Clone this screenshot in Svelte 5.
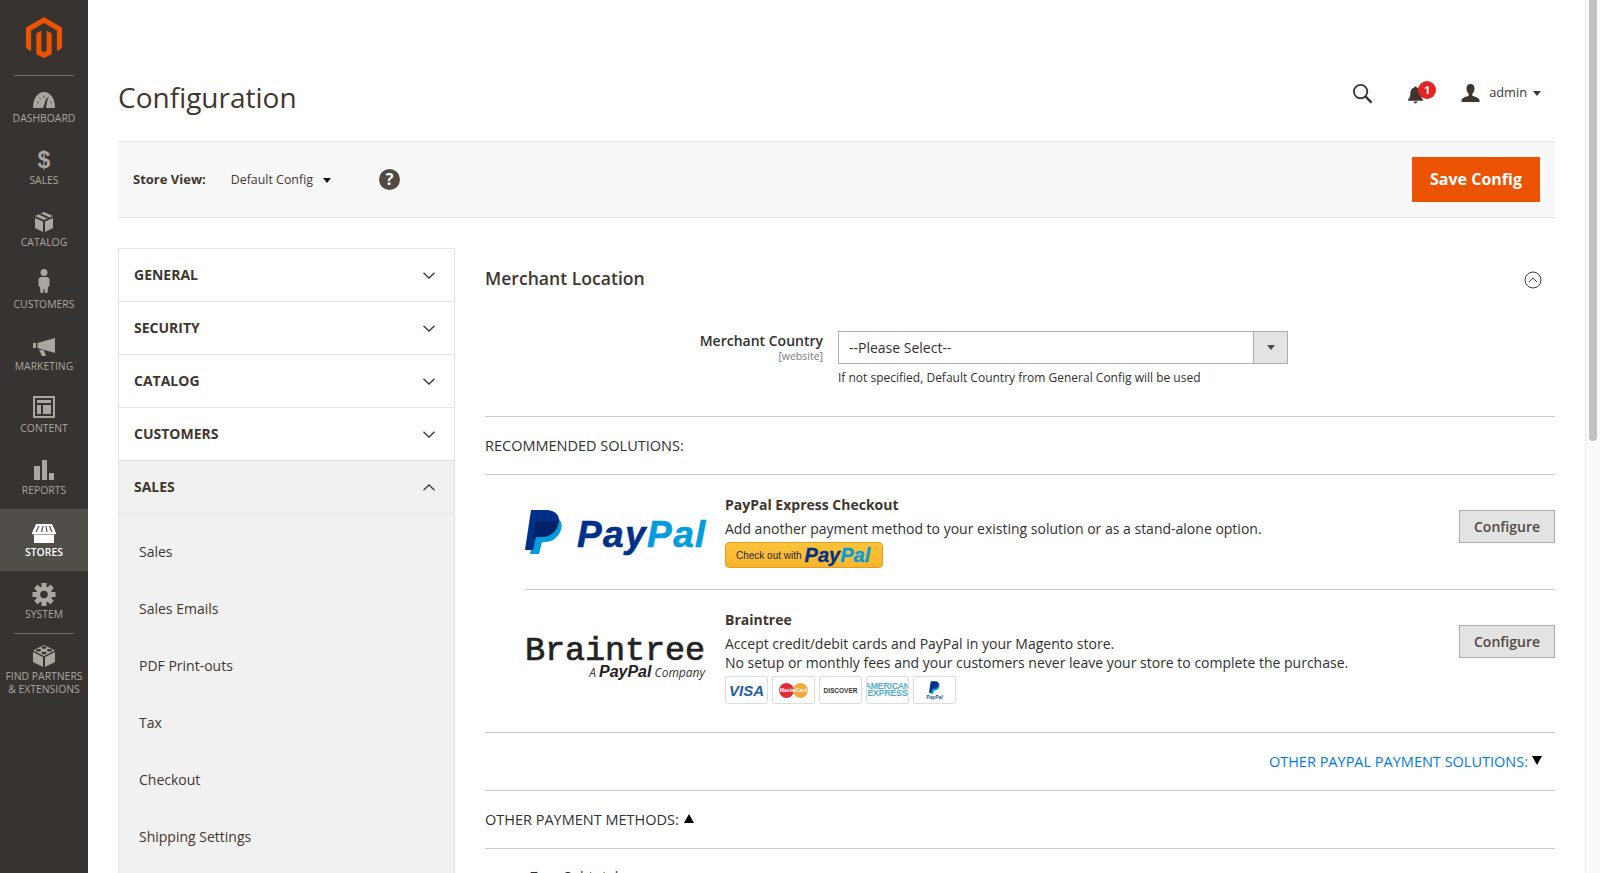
<script>
  const navTop = [
    { label: 'DASHBOARD', icon: 'dash' },
    { label: 'SALES', icon: 'dollar' },
    { label: 'CATALOG', icon: 'box' },
    { label: 'CUSTOMERS', icon: 'person' },
    { label: 'MARKETING', icon: 'mega' },
    { label: 'CONTENT', icon: 'content' },
    { label: 'REPORTS', icon: 'bars' },
    { label: 'STORES', icon: 'store', active: true },
    { label: 'SYSTEM', icon: 'gear' }
  ];
  const sections = ['GENERAL', 'SECURITY', 'CATALOG', 'CUSTOMERS'];
  const subs = ['Sales', 'Sales Emails', 'PDF Print-outs', 'Tax', 'Checkout', 'Shipping Settings'];
  const teeth = [0, 45, 90, 135, 180, 225, 270, 315];
</script>

{#snippet navIcon(name)}
  {#if name === 'dollar'}
    <span class="nav-glyph">$</span>
  {:else}
  <svg class="nav-icon" viewBox="0 0 32 26" aria-hidden="true">
    {#if name === 'dash'}
      <path d="M5 23C5 13 10 7 16 7s11 6 11 16z" />
      <path d="M15 23l3.500-10 1.300.5L18 23z" fill="#373330" />
      <path d="M9 17l1.500 1M11.500 12.500l1 1.300M16 10.500v2M20.500 12l-1 1.500M24 17l-1.500 1" stroke="#373330" stroke-width="1" />
    {:else if name === 'box'}
      <path d="M16 3l9 4-9 4-9-4z" />
      <path d="M10.500 5.200l9 4.200 2-.9-9-4.200z" fill="#373330" />
      <path d="M7 9l8 3.500V23l-8-4zM25 9l-8 3.500V23l8-4z" />
    {:else if name === 'person'}
      <circle cx="16" cy="1.500" r="3.500" />
      <path d="M12.500 6h7l2 2v7l-1.500 1-.5 6h-2.500l-1-5-1 5h-2.500l-.5-6-1.500-1V8z" />
    {:else if name === 'mega'}
      <path d="M5 10h3v5H5zM9.500 10L27 5v15L9.500 15zM11 16.500l5 1 2 5.500h-4z" />
    {:else if name === 'content'}
      <path fill-rule="evenodd" d="M5 1h22v22H5zm2 2v18h18V3zm2 2h14v3H9zm0 5h4v9H9zm6 0h8v9h-8z" />
    {:else if name === 'bars'}
      <path d="M6 9h6v14H6zM14 3h5v20h-5zM21 16h5v7h-5z" />
    {:else if name === 'store'}
      <path d="M8 5h16l4 9c0 1-1 1.500-2 1.500H6c-1 0-2-.5-2-1.500z" />
      <path d="M11 7l-3 6M15 7l-1.500 6M18 7l1 6M21.500 7l2.500 6" stroke="#514d49" stroke-width="1.200" />
      <path d="M6 16h20v8H6z" />
    {:else if name === 'gear'}
      {#each teeth as t}
        <rect x="13.500" y="2" width="5" height="5" transform="rotate({t} 16 13.500)" />
      {/each}
      <circle cx="16" cy="13.500" r="8" />
      <circle cx="16" cy="13.500" r="3.800" fill="#373330" />
    {/if}
  </svg>
  {/if}
{/snippet}

<div class="page">
  <aside class="sidebar">
    <div class="logo">
      <svg viewBox="0 0 36 41" width="36" height="41" aria-hidden="true">
        <path fill="#eb5202" d="M18 0L0 10.400v20.800l5.100 3V13.400L18 6l12.900 7.400v20.800l5.100-3V10.400z" />
        <path fill="#eb5202" d="M20.600 33.700L18 35.200l-2.600-1.500V13.400l-5.100 3v20.800L18 41l7.700-3.800V16.400l-5.100-3z" />
      </svg>
    </div>
    <nav class="side-nav">
      {#each navTop as item}
        <div class="side-item" class:active={item.active}>
          {@render navIcon(item.icon)}
          <span>{item.label}</span>
        </div>
      {/each}
      <div class="side-item partners">
        <svg class="nav-icon" viewBox="0 0 32 26" aria-hidden="true">
          <path d="M16 2l11 5.500L16 13 5 7.500z" />
          <path d="M5 9l10 5v10L5 19zM27 9l-10 5v10l10-5z" />
          <ellipse cx="16" cy="4.500" rx="2.600" ry="1.200" fill="#373330" />
          <ellipse cx="10.500" cy="7.300" rx="2.600" ry="1.200" fill="#373330" />
          <ellipse cx="21.500" cy="7.300" rx="2.600" ry="1.200" fill="#373330" />
          <ellipse cx="16" cy="10" rx="2.600" ry="1.200" fill="#373330" />
        </svg>
        <span>FIND PARTNERS<br />&amp; EXTENSIONS</span>
      </div>
    </nav>
  </aside>

  <main class="main">
    <header class="topbar">
      <h1>Configuration</h1>
      <div class="actions">
        <svg class="search" viewBox="0 0 22 22" aria-hidden="true">
          <circle cx="9" cy="9" r="7" fill="none" stroke="#41362f" stroke-width="2" />
          <path d="M14 14l6.500 6.500" stroke="#41362f" stroke-width="2.600" />
        </svg>
        <div class="bell">
          <svg viewBox="0 0 18 20" width="17" height="20" aria-hidden="true">
            <path fill="#41362f" d="M9 1c1 0 1.500.6 1.500 1.400C13.500 3 14.500 6 14.500 9c0 3 1 4.500 2.500 6v1H1v-1c1.500-1.500 2.500-3 2.500-6 0-3 1-6 4-6.600C7.500 1.600 8 1 9 1zM7 17h4c0 1-1 2-2 2s-2-1-2-2z" />
          </svg>
          <span class="badge">1</span>
        </div>
        <div class="user">
          <svg viewBox="0 0 20 20" width="19" height="18" aria-hidden="true">
            <path fill="#41362f" d="M10 0c3 0 4.500 2.200 4.500 5S13 10 12 11v2c2 1 8 2 8 5v2H0v-2c0-3 6-4 8-5v-2C7 10 5.500 8 5.500 5S7 0 10 0z" />
          </svg>
          <span>admin</span>
          <i class="caret small"></i>
        </div>
      </div>
    </header>

    <div class="toolbar">
      <strong>Store View:</strong>
      <span class="scope">Default Config</span>
      <i class="caret"></i>
      <span class="help">?</span>
      <button class="save">Save Config</button>
    </div>

    <div class="columns">
      <div class="tabs">
        {#each sections as s}
          <div class="tab"><span>{s}</span>
            <svg viewBox="0 0 12 7" width="12" height="7" aria-hidden="true"><path d="M.5.800L6 6l5.500-5.200" fill="none" stroke="#41362f" stroke-width="1.300" /></svg>
          </div>
        {/each}
        <div class="tab open"><span>SALES</span>
          <svg viewBox="0 0 12 7" width="12" height="7" aria-hidden="true"><path d="M.5 6.200L6 1l5.500 5.200" fill="none" stroke="#41362f" stroke-width="1.300" /></svg>
        </div>
        <ul class="subs">
          {#each subs as s}<li>{s}</li>{/each}
        </ul>
      </div>

      <section class="content">
        <div class="sec-head">
          <h2>Merchant Location</h2>
          <svg viewBox="0 0 18 18" width="18" height="18" aria-hidden="true">
            <circle cx="9" cy="9" r="8" fill="none" stroke="#41362f" />
            <path d="M5 11l4-4 4 4" fill="none" stroke="#41362f" />
          </svg>
        </div>
        <div class="field">
          <div class="label">Merchant Country<small>[website]</small></div>
          <div class="control">
            <div class="select"><span>--Please Select--</span><b><i class="caret tiny"></i></b></div>
            <p>If not specified, Default Country from General Config will be used</p>
          </div>
        </div>

        <div class="rule-head first">RECOMMENDED SOLUTIONS:</div>

        <div class="solution">
          <div class="logo-cell">
            <svg class="pp-mark" viewBox="0 0 38 44" aria-hidden="true">
              <path fill="#009cde" d="M10 9h24c4 4 3 11 0 15-3 5-8 8-14 8h-3l-3 12H5l2-9z" />
              <path fill="#003087" d="M6 0h15c9 0 14 5 13 12-2 10-9 15-18 15h-5l-3 13H0z" />
              <path fill="#012169" d="M11 11h22.500C33 20 26 27 17 27H8z" />
            </svg>
            <span class="pp-word"><span class="pp-dark">Pay</span><span class="pp-light">Pal</span></span>
          </div>
          <div class="desc">
            <h3>PayPal Express Checkout</h3>
            <p>Add another payment method to your existing solution or as a stand-alone option.</p>
            <div class="checkout"><span>Check out with</span><b><span class="pp-dark">Pay</span><span class="pp-light">Pal</span></b></div>
          </div>
          <button class="configure">Configure</button>
        </div>

        <div class="solution second">
          <div class="logo-cell bt">
            <span class="bt-word">Braintree</span>
            <span class="bt-sub">A <b>PayPal</b> Company</span>
          </div>
          <div class="desc">
            <h3>Braintree</h3>
            <p>Accept credit/debit cards and PayPal in your Magento store.<br />No setup or monthly fees and your customers never leave your store to complete the purchase.</p>
            <div class="cards">
              <span class="card visa">VISA</span>
              <span class="card mc"><i></i><i></i><em>MasterCard</em></span>
              <span class="card disc">DISCOVER</span>
              <span class="card amex">AMERICAN<br />EXPRESS</span>
              <span class="card ppc">
                <svg viewBox="0 0 38 44" width="11" height="13" aria-hidden="true">
                  <path fill="#009cde" d="M10 9h24c4 4 3 11 0 15-3 5-8 8-14 8h-3l-3 12H5l2-9z" />
                  <path fill="#003087" d="M6 0h15c9 0 14 5 13 12-2 10-9 15-18 15h-5l-3 13H0z" />
                </svg>
                <em>PayPal</em>
              </span>
            </div>
          </div>
          <button class="configure">Configure</button>
        </div>

        <div class="rule-head link">OTHER PAYPAL PAYMENT SOLUTIONS:<i class="tri down"></i></div>
        <div class="rule-head">OTHER PAYMENT METHODS:<i class="tri up"></i></div>
        <div class="peek">Zero Subtotal</div>
      </section>
    </div>
  </main>

  <div class="scrollbar"><div class="thumb"></div></div>
</div>

<style>
  :global(body) { margin: 0; background: #fff; }
  * { box-sizing: border-box; }
  .page {
    display: flex; height: 873px; overflow: hidden;
    font-family: "Open Sans", sans-serif; color: #303030; font-size: 14px;
  }
  .sidebar { width: 88px; flex: none; background: #373330; }
  .logo { height: 76px; margin: 0 14px; padding-top: 17px; display: flex; justify-content: center; border-bottom: 1px solid #736d69; }
  .side-nav { display: flex; flex-direction: column; margin-top: -1px; }
  .side-item {
    height: 62px; display: flex; flex-direction: column; align-items: center; justify-content: flex-start;
    padding-top: 10px; gap: 1px; color: #aaa6a0; font-size: 10.400px; line-height: 13px; text-align: center;
  }
  .side-item.active { background: #514d49; color: #fff; font-weight: 600; }
  .nav-icon { width: 32px; height: 26px; fill: #aaa6a0; flex: none; overflow: visible; }
  .active .nav-icon { fill: #fff; }
  .nav-glyph { height: 26px; font: 700 23px/26px "Liberation Sans", sans-serif; color: #aaa6a0; }
  .partners { height: auto; white-space: nowrap; position: relative; }
  .partners::before { content: ""; position: absolute; top: 0; left: 14px; right: 14px; height: 1px; background: #736d69; }

  .main { flex: 1; min-width: 0; padding: 0 30px; }
  .topbar { height: 141px; display: flex; align-items: flex-start; justify-content: space-between; padding-top: 74px; }
  h1 { margin: 0; font-size: 28px; line-height: 46px; font-weight: 400; color: #41362f; }
  .actions { display: flex; align-items: center; padding-top: 8px; padding-right: 14px; color: #41362f; font-size: 12.800px; }
  .search { width: 21px; height: 21px; margin-right: 34px; }
  .bell { position: relative; display: flex; margin-right: 24px; width: 30px; padding-top: 3px; }
  .badge {
    position: absolute; left: 11px; top: -1px; width: 18px; height: 18px; border-radius: 50%;
    background: #e22626; color: #fff; font-size: 11px; font-weight: 700; text-align: center; line-height: 18px;
  }
  .user { display: flex; align-items: center; color: #41362f; }
  .user svg { margin-right: 9px; margin-bottom: 2px; }
  .user span { margin-right: 6px; margin-bottom: 4px; }

  .toolbar {
    height: 77px; background: #f8f8f8; border-top: 1px solid #e3e3e3; border-bottom: 1px solid #e3e3e3;
    display: flex; align-items: center; padding: 0 15px; font-size: 13px; color: #41362f;
  }
  .toolbar strong { font-weight: 700; margin-right: 25px; margin-bottom: 2px; }
  .toolbar > .caret { margin-top: 2px; }
  .scope { margin-right: 10px; font-size: 12.400px; }
  .help {
    width: 21px; height: 21px; border-radius: 50%; background: #514943; color: #fff; margin-left: 48px;
    font-weight: 700; font-size: 16px; text-align: center; line-height: 21px;
  }
  .save {
    margin-left: auto; width: 128px; height: 45px; background: #eb5202; color: #fff; border: 0; padding: 0 0 2px;
    font: 700 16px "Open Sans", sans-serif;
  }
  .caret { width: 0; height: 0; border: 4px solid transparent; border-top: 5px solid #111; border-bottom: 0; display: inline-block; }
  .caret.small { border-top-color: #41362f; }
  .caret.tiny { border-top-color: #514943; }

  .columns { display: flex; gap: 30px; padding-top: 30px; align-items: flex-start; }
  .tabs { width: 337px; flex: none; border: 1px solid #e3e3e3; background: #fff; height: 700px; }
  .tab {
    height: 53px; padding: 0 19px 2px 15px; display: flex; align-items: center; justify-content: space-between;
    font-weight: 700; font-size: 14px; color: #41362f; border-bottom: 1px solid #e3e3e3;
  }
  .tab svg { margin-top: 2px; }
  .tab.open { background: #f1f1f1; }
  .subs { list-style: none; margin: 0; padding: 9px 0 0; background: #f1f1f1; height: 400px; }
  .subs li { height: 57px; line-height: 57px; padding-left: 20px; font-size: 14px; color: #41362f; }

  .content { flex: 1; min-width: 0; }
  .sec-head { height: 62px; display: flex; justify-content: space-between; align-items: center; padding: 0 13px 2px 0; }
  h2 { margin: 0; font-size: 17.600px; font-weight: 600; color: #41362f; }
  .sec-head svg { margin-top: 3px; }
  .field { display: flex; gap: 15px; padding: 21px 0 0 0; height: 107px; border-bottom: 1px solid #ccc; }
  .label { width: 338px; text-align: right; font-weight: 600; font-size: 14px; color: #303030; line-height: 18px; padding-top: 1px; }
  .label small { display: block; font-weight: 400; font-size: 10.500px; color: #777; line-height: 12px; }
  .select { width: 450px; height: 33px; border: 1px solid #adadad; display: flex; justify-content: space-between; align-items: stretch; font-size: 14px; color: #303030; }
  .select span { padding-left: 10px; line-height: 31px; }
  .select b { width: 34px; background: #e3e3e3; border-left: 1px solid #adadad; display: flex; align-items: center; justify-content: center; }
  .control p { margin: 6px 0 0; font-size: 12px; line-height: 16px; color: #303030; }

  .rule-head { height: 58px; display: flex; align-items: center; font-size: 14.500px; color: #303030; border-bottom: 1px solid #ccc; }
  .rule-head.link { height: 59px; justify-content: flex-end; color: #007bdb; padding-right: 13px; border-top: 1px solid #ccc; }
  .tri { width: 0; height: 0; border: 5px solid transparent; margin-left: 5px; margin-bottom: 3px; }
  .tri.down { border-top: 9px solid #000; border-bottom: 0; margin-left: 4px; }
  .tri.up { border-bottom: 9px solid #000; border-top: 0; }

  .solution { display: flex; align-items: flex-start; margin-left: 40px; height: 114px; padding-top: 20px; position: relative; }
  .solution.second { height: 143px; border-top: 1px solid #ccc; padding-top: 20px; }
  .logo-cell { width: 200px; flex: none; display: flex; align-items: center; gap: 14px; padding-top: 15px; }
  .pp-mark { width: 38px; height: 44px; flex: none; }
  .pp-word { margin-top: 6px; font: italic 700 37px/38px "Liberation Sans", sans-serif; letter-spacing: 1.400px; -webkit-text-stroke: .6px currentColor; white-space: nowrap; }
  .pp-dark { color: #003087; }
  .pp-light { color: #009cde; }
  .desc { flex: 1; color: #303030; }
  h3 { margin: 0; font-size: 14px; line-height: 19px; font-weight: 700; color: #41362f; }
  .desc p { margin: 5px 0 0; font-size: 14px; line-height: 19px; }
  .checkout {
    margin-top: 4px; width: 158px; height: 26px; border-radius: 4px; border: 1px solid #e59c1d; background: linear-gradient(#fdc33a, #f8b52c);
    display: flex; align-items: center; padding-left: 10px; gap: 3px; font: 10px "Liberation Sans", sans-serif; color: #1f2a44; white-space: nowrap;
  }
  .checkout b { font: italic 700 20px "Liberation Sans", sans-serif; -webkit-text-stroke: .3px currentColor; }
  .configure {
    flex: none; width: 96px; height: 33px; background: #e3e3e3; border: 1px solid #adadad; color: #514943;
    font: 600 14px "Open Sans", sans-serif; margin-top: 15px; margin-bottom: auto;
  }
  .bt { display: block; padding-top: 29px; }
  .bt-word { display: block; font: 400 33.500px/24px "Liberation Mono", monospace; color: #222; letter-spacing: -.1px; -webkit-text-stroke: .7px currentColor; }
  .bt-sub { display: block; text-align: right; padding-right: 20px; font: italic 12px/16px "Open Sans", sans-serif; color: #333; }
  .bt-sub b { font: italic 700 16px "Liberation Sans", sans-serif; color: #222; }
  .cards { display: flex; gap: 4px; margin-top: 4px; }
  .card {
    width: 43px; height: 28px; border: 1px solid #ddd; border-radius: 2px; background: #fff; position: relative;
    display: flex; align-items: center; justify-content: center; font: italic 700 15px "Liberation Sans", sans-serif; color: #1a5f9c; overflow: hidden; text-align: center;
  }
  .disc { font: 700 6.500px "Liberation Sans", sans-serif; color: #333; }
  .amex { font: 400 8.500px/7px "Liberation Sans", sans-serif; color: #2d9cc8; -webkit-text-stroke: .2px currentColor; white-space: nowrap; }
  .mc i { position: absolute; width: 15px; height: 15px; border-radius: 50%; top: 6px; left: 6px; background: #e22b38; }
  .mc i + i { left: 20px; background: #f2a93b; }
  .mc em { position: relative; font: italic 700 5px "Liberation Sans", sans-serif; color: #fff; }
  .ppc { flex-direction: column; gap: 0; }
  .ppc em { font: italic 700 5px/6px "Liberation Sans", sans-serif; color: #1a4f8c; }
  .peek { margin: 18px 0 0 45px; font-size: 14px; line-height: 19px; color: #303030; }

  .scrollbar { width: 15px; flex: none; background: #fafafa; border-left: 1px solid #e8e8e8; padding: 0 3px; }
  .thumb { height: 441px; background: #c1c1c1; border-radius: 0 0 4px 4px; }
</style>
